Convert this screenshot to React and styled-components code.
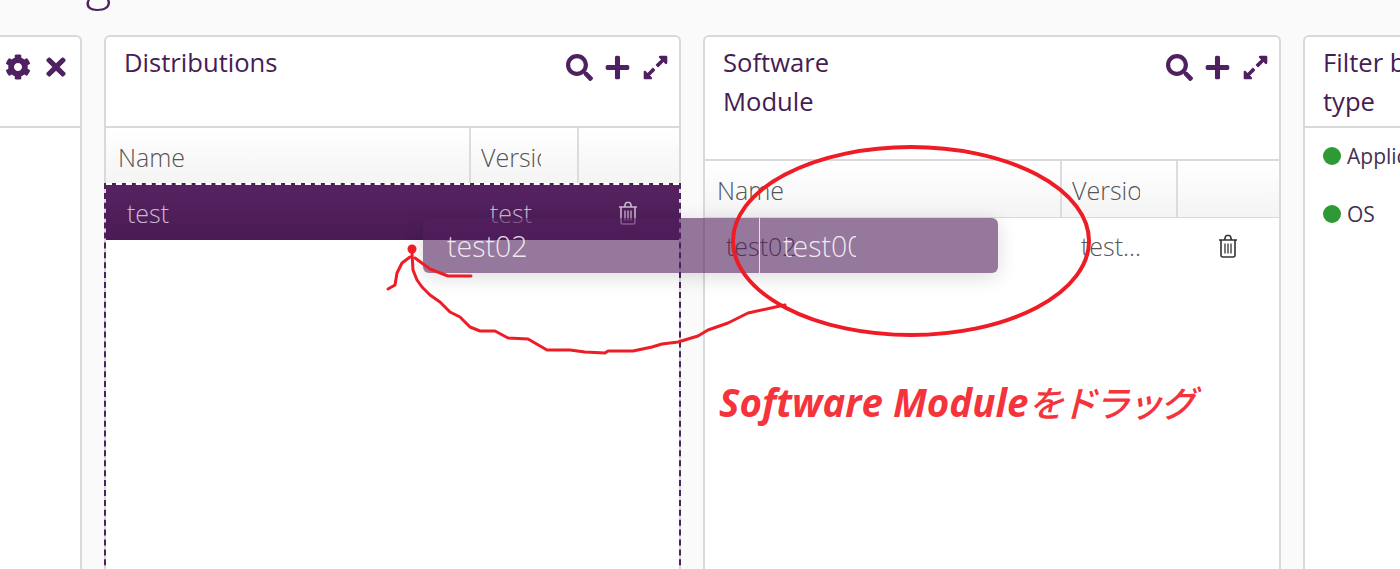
import React from "react";
import styled, { createGlobalStyle } from "styled-components";
import { FaSearch, FaPlus, FaExpandAlt, FaCog, FaTimes } from "react-icons/fa";

const purple = "#4f2160";

const GlobalStyle = createGlobalStyle`
  html, body {
    margin: 0;
    padding: 0;
    background: #fafafa;
    font-family: "Open Sans", "Noto Sans", sans-serif;
    overflow: hidden;
  }
`;

const Page = styled.div`
  position: relative;
  width: 1400px;
  height: 569px;
  overflow: hidden;
`;

const Heading = styled.h1`
  margin: -50px 0 0 -340px;
  height: 85px;
  font-size: 50px;
  line-height: 60px;
  font-weight: 300;
  color: ${purple};
  white-space: nowrap;
`;

const Columns = styled.div`
  display: flex;
  gap: 22px;
  margin-left: -495px;
`;

const Panel = styled.section`
  flex: none;
  width: ${(props) => props.width}px;
  height: 560px;
  box-sizing: border-box;
  display: flex;
  flex-direction: column;
  background: #fff;
  border: 2px solid #d9d9d9;
  border-bottom: 0;
  border-radius: 6px 6px 0 0;
`;

const PanelHeader = styled.header`
  flex: none;
  height: ${(props) => props.height}px;
  box-sizing: border-box;
  display: flex;
  justify-content: space-between;
  padding: 6px 10px 0 18px;
  border-bottom: 2px solid #d9d9d9;
`;

const Title = styled.h2`
  margin: 0;
  width: 150px;
  font-size: 25.6px;
  line-height: 39px;
  font-weight: 400;
  color: #461c55;
`;

const Tools = styled.div`
  display: flex;
  gap: 11px;
  padding-top: 10px;
  height: 28px;
  align-items: center;
  color: ${purple};
`;

const HeaderRow = styled.div`
  flex: none;
  display: grid;
  grid-template-columns: ${(props) => props.cols};
  height: ${(props) => (props.flush ? 55 : 56)}px;
  background: linear-gradient(#fff, #f4f4f4);
  border-bottom: ${(props) => (props.flush ? "0" : "1px solid #d9d9d9")};
`;

const HeaderCell = styled.div`
  box-sizing: border-box;
  padding: 0 36px 0 12px;
  font-size: 25px;
  font-weight: 300;
  line-height: 58px;
  color: #555;
  overflow: hidden;
  white-space: nowrap;
  & + & {
    padding-left: 10px;
    border-left: 2px solid #dcdcdc;
  }
  & > span {
    display: block;
    overflow: hidden;
  }
`;

const DropArea = styled.div`
  flex: 1;
  margin: 0 -2px;
  border-left: 2px dashed ${purple};
  border-right: 2px dashed ${purple};
`;

const Row = styled.div`
  display: grid;
  grid-template-columns: ${(props) => props.cols};
  align-items: center;
  height: ${(props) => props.height}px;
  box-sizing: border-box;
  font-size: 25px;
  font-weight: 300;
  color: ${(props) => (props.selected ? "#c9b8cf" : "#555")};
  background: ${(props) =>
    props.selected ? "linear-gradient(#562360, #4a1b56)" : "transparent"};
  border-top: ${(props) => (props.selected ? "2px dashed #fff" : "0")};
`;

const RowCell = styled.div`
  padding-left: 21px;
  white-space: nowrap;
`;

const TrashCell = styled.div`
  display: flex;
  justify-content: center;
  padding-left: ${(props) => props.shift}px;
`;

const FilterList = styled.ul`
  margin: 0;
  padding: 13px 0 0 18px;
  list-style: none;
  display: flex;
  flex-direction: column;
  gap: 28px;
`;

const FilterItem = styled.li`
  display: flex;
  align-items: center;
  gap: 6px;
  height: 30px;
  font-size: 21px;
  color: #46304f;
`;

const Dot = styled.span`
  width: 18px;
  height: 18px;
  border-radius: 50%;
  background: #2f9a35;
`;

const DragGhost = styled.div`
  position: absolute;
  left: 423px;
  top: 218px;
  width: 575px;
  height: 55px;
  display: flex;
  border-radius: 6px;
  background: rgba(82, 30, 92, 0.6);
  box-shadow: 0 4px 20px rgba(0, 0, 0, 0.14);
  font-size: 28.5px;
  font-weight: 300;
  line-height: 56px;
  color: rgba(255, 255, 255, 0.85);
`;

const GhostCell = styled.div`
  flex: none;
  box-sizing: border-box;
  width: ${(props) => props.width}px;
  padding-left: ${(props) => props.pad}px;
  border-right: ${(props) => (props.divided ? "1px solid #e8e0ea" : "0")};
  & > span {
    display: block;
    width: 73px;
    overflow: hidden;
  }
`;

const Scribble = styled.svg`
  position: absolute;
  left: 0;
  top: 0;
  pointer-events: none;
`;

const Note = styled.div`
  position: absolute;
  left: 719px;
  top: 374px;
  font-size: 38.500px;
  line-height: 54px;
  font-weight: 700;
  font-style: italic;
  color: #f5333b;
  white-space: nowrap;
  & > span {
    font-family: "Noto Sans CJK JP", sans-serif;
    font-size: 36px;
    font-weight: 500;
    letter-spacing: -3px;
  }
`;

const TrashIcon = ({ color }) => (
  <svg width="20" height="24" viewBox="0 0 20 24" fill="none" stroke={color} strokeWidth="1.6">
    <path d="M1 6h18M3 6v15c0 1 .7 2 2 2h10c1.300 0 2-1 2-2V6M6.500 6l1-3.500c.2-.7.6-1 1.200-1h2.600c.6 0 1 .3 1.200 1l1 3.500" />
    <path d="M7 9.500v10M10 9.500v10M13 9.500v10" strokeWidth="1.300" />
  </svg>
);

const distCols = "363px 108px 1fr";
const softCols = "355px 116px 1fr";

export default function App() {
  return (
    <Page>
      <GlobalStyle />
      <Heading>Distributions Management</Heading>
      <Columns>
        <Panel width={577}>
          <PanelHeader height={91}>
            <Title />
            <Tools>
              <FaCog size={26} />
              <FaTimes size={28} />
            </Tools>
          </PanelHeader>
        </Panel>

        <Panel width={577}>
          <PanelHeader height={91}>
            <Title>Distributions</Title>
            <Tools>
              <FaSearch size={27} />
              <FaPlus size={27} />
              <FaExpandAlt size={27} />
            </Tools>
          </PanelHeader>
          <HeaderRow cols={distCols} flush>
            <HeaderCell><span>Name</span></HeaderCell>
            <HeaderCell><span>Version</span></HeaderCell>
            <HeaderCell />
          </HeaderRow>
          <DropArea>
            <Row cols={distCols} height={57} selected>
              <RowCell>test</RowCell>
              <RowCell>test</RowCell>
              <TrashCell shift={0}><TrashIcon color="#c9b8cf" /></TrashCell>
            </Row>
          </DropArea>
        </Panel>

        <Panel width={578}>
          <PanelHeader height={124}>
            <Title>Software Module</Title>
            <Tools>
              <FaSearch size={27} />
              <FaPlus size={27} />
              <FaExpandAlt size={27} />
            </Tools>
          </PanelHeader>
          <HeaderRow cols={softCols}>
            <HeaderCell><span>Name</span></HeaderCell>
            <HeaderCell><span>Version</span></HeaderCell>
            <HeaderCell />
          </HeaderRow>
          <Row cols={softCols} height={56}>
            <RowCell>test02</RowCell>
            <RowCell>test...</RowCell>
            <TrashCell shift={0}><TrashIcon color="#333" /></TrashCell>
          </Row>
        </Panel>

        <Panel width={400}>
          <PanelHeader height={91}>
            <Title>Filter by type</Title>
          </PanelHeader>
          <FilterList>
            <FilterItem><Dot />Application</FilterItem>
            <FilterItem><Dot />OS</FilterItem>
          </FilterList>
        </Panel>
      </Columns>

      <DragGhost>
        <GhostCell width={337} pad={24} divided>test02</GhostCell>
        <GhostCell width={238} pad={23}><span>test00</span></GhostCell>
      </DragGhost>

      <Scribble width="1400" height="569" fill="none" stroke="#ee1c25" strokeLinecap="round" strokeLinejoin="round">
        <ellipse cx="911" cy="241" rx="178" ry="94" strokeWidth="4" />
        <path
          strokeWidth="3"
          d="M785 305L780 306L748 313L728 323L708 330L698 336L678 342L662 344L652 347L633 351L608 351L605 353L585 352L570 350L547 350L528 339L508 338L495 331L480 331L470 327L460 317L450 312L440 302L430 295L422 287L417 280L413 270L412 253"
        />
        <path strokeWidth="3" d="M410 257L402 263L397 273L395 285L388 289M415 258L430 269L448 276L471 276" />
        <circle cx="412" cy="249" r="4.500" fill="#ee1c25" stroke="none" />
      </Scribble>

      <Note>Software Module<span>をドラッグ</span></Note>
    </Page>
  );
}
